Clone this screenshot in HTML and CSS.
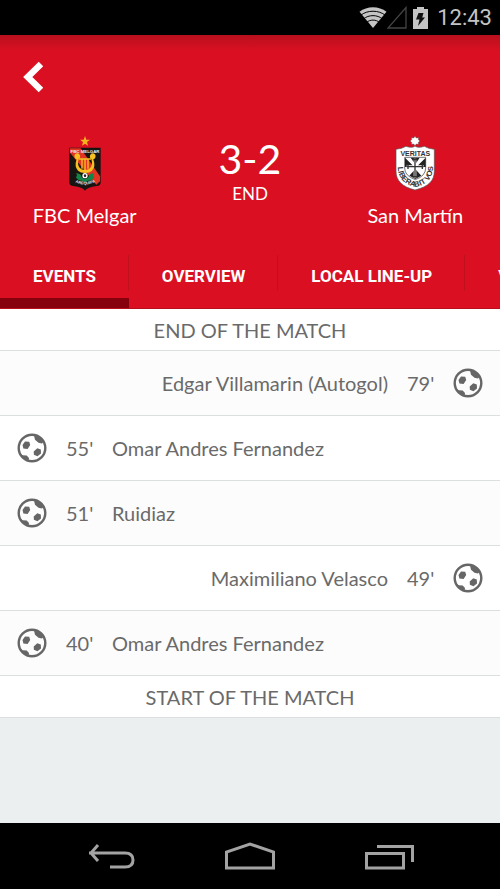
FILE: index.html
```html
<!DOCTYPE html>
<html lang="en">
<head>
    <meta charset="UTF-8">
    <meta name="viewport" content="width=device-width, initial-scale=1.0">
    <title>FBC Melgar 3-2 San Martín</title>
    <link rel="stylesheet" href="styles.css">
</head>
<body>
    <svg class="sprite" aria-hidden="true">
        <symbol id="ball" viewBox="0 0 30 30">
            <circle cx="15" cy="15" r="13.3" fill="none" stroke="currentColor" stroke-width="2.4"/>
            <path fill="currentColor" d="M5.500 12l2.500-3.500 4.200.2 1 3.300-2.600 4-4.200-.5zM16.700 18.500l3.600-3.300 3.500 1.300.2 4-3.600 2.800-3.500-1.500zM17 2.500l5 1.500 4.500 5-1.500 1.500-3.500-.8-3.500-3zM3.500 20.500l2.200 1.700 4 .2 2.300 2.600-.5 3.500-5-2.500z"/>
        </symbol>
    </svg>

    <div class="status-bar">
        <svg class="status-wifi" viewBox="0 0 28 21" width="28" height="21">
            <path fill="#c4c4c4" d="M14 21L.5 4.800C8-1.200 20-1.200 27.500 4.800z"/>
            <g fill="none" stroke="#000" stroke-width="1">
                <path d="M1.500 8.500C8 2.800 20 2.800 26.500 8.500"/>
                <path d="M4.500 12C9.500 7.500 18.500 7.500 23.500 12"/>
                <path d="M7.500 15.500C11 12.300 17 12.300 20.500 15.500"/>
            </g>
        </svg>
        <svg class="status-signal" viewBox="0 0 20 23" width="20" height="23">
            <path fill="none" stroke="#444" stroke-width="1.300" d="M19 1.500V22H1z"/>
        </svg>
        <svg class="status-battery" viewBox="0 0 15 23" width="15" height="23">
            <path fill="#c4c4c4" d="M4 1h7v2h4v20H0V3h4z"/>
            <path fill="#111" d="M5.500 7h5l-1.300 4.500H12L5 20l1.500-6.500H3z"/>
        </svg>
        <time class="clock">12:43</time>
    </div>

    <header class="header">
        <button class="back-btn" aria-label="Back">
            <svg viewBox="0 0 20 32" width="20" height="32">
                <path fill="none" stroke="#fff" stroke-width="6.500" stroke-linejoin="miter" d="M18 3L4.800 16 18 29"/>
            </svg>
        </button>

        <div class="scoreboard">
            <div class="team">
                <svg class="crest" viewBox="134 28 120 168" width="40" height="56">
                    <path fill="#f2b51d" d="M194 31l4 11h11l-9 7 3 11-9-6-9 6 3-11-9-7h11z"/>
                    <path fill="#171412" d="M147 66h94v105q0 8-12 10-28 3-35 14-7-11-35-14-12-2-12-10z"/>
                    <path fill="#e13422" d="M149 68h32l58 84v15l-11 10-79-96z"/>
                    <text class="crest-text" x="194" y="81" font-size="13" fill="#eee">FBC MELGAR</text>
                    <path fill="#f6c025" d="M163 87q8-8 15 0 4 8-3 13-5 18 3 26 5 6 11 6h10q6 0 11-6 8-8 3-26-7-5-3-13 7-8 15 0 3 10-6 14 8 23-4 34-7 7-21 7-14 0-21-7-12-11-4-34-9-4-6-14z"/>
                    <path fill="none" stroke="#f6c025" stroke-width="4" d="M176 100h36M185 99v30M194 99v34M203 99v30"/>
                    <path fill="#138547" d="M168 142l12 4 5 10 9 5 9-5 5-10 12-4-2 9 4 4-9 9-12 2-7 4-7-4-12-2-9-9 4-4z"/>
                    <circle cx="194" cy="150" r="8" fill="#fff"/>
                    <path fill="#222" d="M194 145l4 4-2 5h-4l-2-5z"/>
                    <path id="melgarArc" fill="none" d="M165 170q29 14 60-1"/>
                    <text class="crest-text" font-size="12" fill="#eee"><textPath href="#melgarArc" startOffset="50%">AREQUIPA</textPath></text>
                </svg>
                <h2 class="team-name">FBC Melgar</h2>
            </div>

            <div class="result">
                <p class="score">3-2</p>
                <p class="match-state">END</p>
            </div>

            <div class="team">
                <svg class="crest" viewBox="135 28 120 168" width="40" height="56">
                    <path fill="#fff" stroke="#555" stroke-width="1.500" d="M195 32l4 5 7-1-1 6 5 4-5 4 1 6-7-1-4 5-4-5-7 1 1-6-5-4 5-4-1-6 7 1z"/>
                    <path fill="#fff" stroke="#555" stroke-width="2" d="M138 71q18-2 30-9 8 3 16 3 7 0 11-4 5 4 12 4 8 0 16-3 12 7 30 9v65c0 28-16 47-58 57-40-10-57-29-57-57z"/>
                    <text class="crest-text" x="196" y="90" font-size="21" fill="#333">VERITAS</text>
                    <path fill="#fff" stroke="#333" stroke-width="2" d="M164 95h63v32q0 24-31 35-32-11-32-35z"/>
                    <path fill="#222" d="M165 96l28 28h-28zM227 96l-28 28h28zM182 96h27l-13 20zM196 130l18 20-18 10-18-10z"/>
                    <path fill="none" stroke="#fff" stroke-width="8" d="M195 99v57M170 123h51"/>
                    <path fill="none" stroke="#333" stroke-width="4" d="M195 99v57M170 123h51M188 102h14M188 153h14M174 116v14M217 116v14"/>
                    <path id="martinArc" fill="none" d="M144 100v30q3 42 52 54 51-11 52-54v-32"/>
                    <text class="crest-text" font-size="23" fill="#333"><textPath href="#martinArc" startOffset="50%">LIBERABIT VOS</textPath></text>
                </svg>
                <h2 class="team-name">San Martín</h2>
            </div>
        </div>

        <nav class="tabs">
            <a class="tab active" href="#events">EVENTS</a>
            <a class="tab" href="#overview">OVERVIEW</a>
            <a class="tab" href="#local">LOCAL LINE-UP</a>
            <a class="tab" href="#visitor">VISITOR LINE-UP</a>
        </nav>
    </header>

    <main class="content">
        <ul class="events" id="events">
            <li class="period">END OF THE MATCH</li>
            <li class="event away">
                <svg class="ball"><use href="#ball"/></svg>
                <span class="minute">79'</span>
                <span class="player">Edgar Villamarin (Autogol)</span>
            </li>
            <li class="event">
                <svg class="ball"><use href="#ball"/></svg>
                <span class="minute">55'</span>
                <span class="player">Omar Andres Fernandez</span>
            </li>
            <li class="event">
                <svg class="ball"><use href="#ball"/></svg>
                <span class="minute">51'</span>
                <span class="player">Ruidiaz</span>
            </li>
            <li class="event away">
                <svg class="ball"><use href="#ball"/></svg>
                <span class="minute">49'</span>
                <span class="player">Maximiliano Velasco</span>
            </li>
            <li class="event">
                <svg class="ball"><use href="#ball"/></svg>
                <span class="minute">40'</span>
                <span class="player">Omar Andres Fernandez</span>
            </li>
            <li class="period">START OF THE MATCH</li>
        </ul>
    </main>

    <div class="nav-bar">
        <button class="nav-btn" aria-label="System back">
            <svg viewBox="0 0 50 30" width="50" height="30">
                <path fill="none" stroke="#a3a3a3" stroke-width="3" d="M3 12h36q8 0 8 7t-8 7H24M12 4L5 12l7 8"/>
            </svg>
        </button>
        <button class="nav-btn" aria-label="Home">
            <svg viewBox="0 0 50 30" width="50" height="30">
                <path fill="none" stroke="#a3a3a3" stroke-width="3" d="M1.500 27V11L25 3l23.500 8v16z"/>
            </svg>
        </button>
        <button class="nav-btn" aria-label="Recent apps">
            <svg viewBox="0 0 50 30" width="50" height="30">
                <path fill="none" stroke="#a3a3a3" stroke-width="3" d="M2.500 12.500h37V27h-37zM13 5.500h35.500V21"/>
            </svg>
        </button>
    </div>
</body>
</html>
```

FILE: styles.css
```css
* {
    margin: 0;
    padding: 0;
    box-sizing: border-box;
}

:root {
    --red: #da1022;
    --dark-red: #87000d;
    --text: #6a6a6a;
    --line: #dcdfe0;
}

body {
    display: flex;
    flex-direction: column;
    min-height: 100vh;
    background-color: #ebeff0;
    color: var(--text);
    font-family: Lato, sans-serif;
    font-size: 20px;
    line-height: 24px;
}

button {
    border: none;
    background: none;
    cursor: pointer;
}

svg {
    display: block;
}

.sprite {
    display: none;
}

/* Status bar */
.status-bar {
    display: flex;
    justify-content: flex-end;
    align-items: center;
    height: 35px;
    padding-right: 8px;
    background-color: #000;
}

.status-battery {
    margin: 0 9px 0 6px;
}

.clock {
    color: #c4c4c4;
    font-family: Roboto, sans-serif;
    font-size: 22px;
}

/* Match header */
.header {
    background: linear-gradient(#b80f1d, var(--red) 16px);
    color: white;
    border-bottom: 1px solid #b80f1d;
}

.back-btn {
    display: block;
    padding: 26px 23px;
}

.scoreboard {
    display: grid;
    grid-template-columns: repeat(3, 1fr);
    padding: 16px 2px 0;
    text-align: center;
}

.crest {
    margin: 0 auto;
}

.crest-text {
    font-family: "Liberation Sans", sans-serif;
    font-weight: bold;
    text-anchor: middle;
}

.team-name {
    margin-top: 12px;
    font-size: 20px;
    font-weight: normal;
}

.score {
    font-size: 41px;
    line-height: 47px;
}

.match-state {
    font-size: 17px;
}

.tabs {
    display: flex;
    margin-top: 18px;
    overflow: hidden;
    font-family: Roboto, sans-serif;
    font-size: 17px;
    font-weight: bold;
}

.tab {
    flex: none;
    padding: 19px 33px 10px;
    border-bottom: 10px solid transparent;
    background: linear-gradient(#c10f1e, #c10f1e) right 10px / 1px 36px no-repeat;
    color: white;
    text-decoration: none;
}

.tab.active {
    border-bottom-color: var(--dark-red);
}

/* Events */
.content {
    flex: 1;
}

.events {
    list-style: none;
    background-color: white;
}

.period,
.event {
    border-bottom: 1px solid var(--line);
}

.period {
    padding: 9px 0 8px;
    text-align: center;
}

.event {
    display: flex;
    align-items: center;
    gap: 19px;
    height: 65px;
    padding: 0 17px;
}

.event:nth-child(even) {
    background-color: #fcfcfc;
}

.event.away {
    flex-direction: row-reverse;
}

.ball {
    width: 30px;
    height: 30px;
    color: #666;
}

.minute {
    width: 27px;
}

/* Navigation bar */
.nav-bar {
    display: grid;
    grid-template-columns: repeat(3, 1fr);
    padding: 0 41px;
    background-color: #000;
}

.nav-btn {
    display: flex;
    justify-content: center;
    padding: 18px 0;
}
```
